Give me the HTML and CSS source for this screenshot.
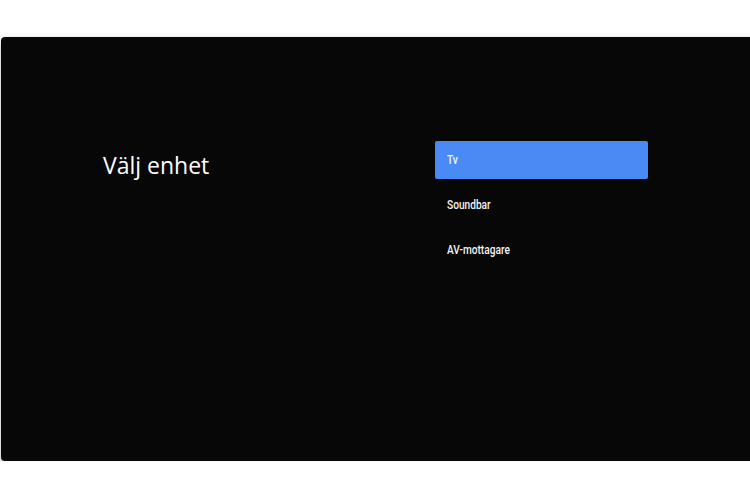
FILE: index.html
```html
<!DOCTYPE html>
<html lang="sv">
  <head>
    <meta charset="UTF-8" />
    <title>Välj enhet</title>
    <link rel="stylesheet" href="styles.css">
  </head>
  <body>
    <div class="screen">
      <div class="title-col">
        <h1>Välj enhet</h1>
      </div>
      <ul class="device-list">
        <li class="selected"><span>Tv</span></li>
        <li><span>Soundbar</span></li>
        <li><span>AV-mottagare</span></li>
      </ul>
    </div>
  </body>
</html>
```
FILE: styles.css
```css
body {
  margin: 0;
  background-color: #fff;
  font-family: Roboto, "Liberation Sans", sans-serif;
  overflow: hidden;
}

.screen {
  margin: 37px 0 0 1px;
  width: 760px;
  height: 424px;
  background-color: #070707;
  border-radius: 4px 0 0 4px;
  box-shadow: 0 4px 10px rgba(0, 0, 0, 0.3);
  display: flex;
}

.title-col {
  width: 434px;
  padding-left: 102px;
  box-sizing: border-box;
}

.title-col h1 {
  margin: 110px 0 0 0;
  color: #fff;
  font-family: "Open Sans", sans-serif;
  font-weight: 400;
  font-size: 23px;
  line-height: 36px;
}

.device-list {
  list-style: none;
  margin: 104px 0 0 0;
  padding: 0;
  width: 213px;
  display: flex;
  flex-direction: column;
  gap: 7px;
}

.device-list li {
  height: 38px;
  line-height: 38px;
  padding-left: 12px;
  color: #f4f4f4;
  font-size: 13px;
  font-weight: 500;
  border-radius: 2px;
}

/* narrow the type, the TV font is a condensed one */
.device-list li span {
  display: inline-block;
  transform: scaleX(0.78);
  transform-origin: left center;
}

.device-list li.selected {
  background-color: #4a8af4;
}
```
